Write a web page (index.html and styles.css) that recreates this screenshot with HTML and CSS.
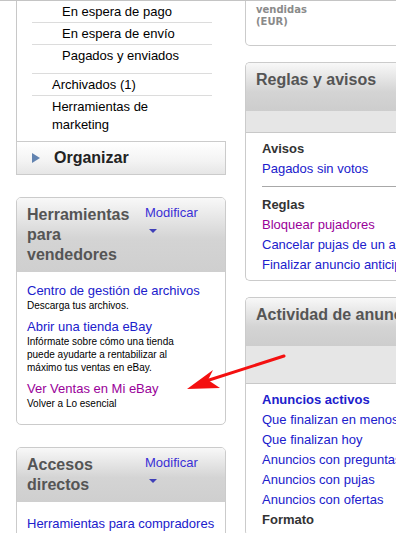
FILE: index.html
```html
<!DOCTYPE html>
<html lang="es">
<head>
<meta charset="utf-8">
<title>Mi eBay - Ventas</title>
<link rel="stylesheet" href="styles.css">
</head>
<body>
<div class="page">
  <div class="col-left">
    <ul class="nav-list">
      <li class="nav-item sub">En espera de pago</li>
      <li class="nav-item sub">En espera de envío</li>
      <li class="nav-item sub last-sub">Pagados y enviados</li>
      <li class="nav-item">Archivados (1)</li>
      <li class="nav-item multi">Herramientas de<br>marketing</li>
    </ul>
    <div class="nav-section"><span class="tri"></span>Organizar</div>

    <div class="box tools">
      <div class="box-head">
        <h2 class="box-title">Herramientas para vendedores</h2>
        <div class="modify"><a href="#">Modificar</a><span class="caret"></span></div>
      </div>
      <div class="box-body">
        <div class="tool">
          <a class="tool-link" href="#">Centro de gestión de archivos</a>
          <div class="tool-desc">Descarga tus archivos.</div>
        </div>
        <div class="tool">
          <a class="tool-link" href="#">Abrir una tienda eBay</a>
          <div class="tool-desc">Infórmate sobre cómo una tienda<br>puede ayudarte a rentabilizar al<br>máximo tus ventas en eBay.</div>
        </div>
        <div class="tool">
          <a class="tool-link visited" href="#">Ver Ventas en Mi eBay</a>
          <div class="tool-desc">Volver a Lo esencial</div>
        </div>
      </div>
    </div>

    <div class="box shortcuts">
      <div class="box-head">
        <h2 class="box-title">Accesos directos</h2>
        <div class="modify"><a href="#">Modificar</a><span class="caret"></span></div>
      </div>
      <div class="box-body shortcuts-body">
        <a class="tool-link" href="#">Herramientas para compradores</a>
      </div>
    </div>
  </div>

  <div class="col-right">
    <div class="summary">vendidas<br>(EUR)</div>

    <div class="rbox">
      <div class="rbox-head"><h2 class="box-title">Reglas y avisos</h2></div>
      <div class="band"></div>
      <div class="rbox-body">
        <div class="group-title">Avisos</div>
        <a class="rlink" href="#">Pagados sin votos</a>
        <div class="sep"></div>
        <div class="group-title">Reglas</div>
        <a class="rlink visited" href="#">Bloquear pujadores</a>
        <a class="rlink" href="#">Cancelar pujas de un anuncio</a>
        <a class="rlink" href="#">Finalizar anuncio anticipadamente</a>
      </div>
    </div>

    <div class="rbox">
      <div class="rbox-head"><h2 class="box-title">Actividad de anuncios</h2></div>
      <div class="band tall"></div>
      <div class="rbox-body">
        <a class="rlink strong" href="#">Anuncios activos</a>
        <a class="rlink" href="#">Que finalizan en menos de 24 horas</a>
        <a class="rlink" href="#">Que finalizan hoy</a>
        <a class="rlink" href="#">Anuncios con preguntas</a>
        <a class="rlink" href="#">Anuncios con pujas</a>
        <a class="rlink" href="#">Anuncios con ofertas</a>
        <div class="group-title">Formato</div>
      </div>
    </div>
  </div>
</div>

<svg class="arrow" width="396" height="533" viewBox="0 0 396 533" aria-hidden="true">
  <line x1="284" y1="356" x2="206" y2="381" stroke="#f41010" stroke-width="3" stroke-linecap="round"/>
  <polygon points="187,389 213,370 208,380 220,388" fill="#f41010"/>
</svg>
</body>
</html>
```
FILE: styles.css
```css
html, body {
  margin: 0;
  padding: 0;
  overflow: hidden;
  background: #fff;
}

body {
  font-family: "Liberation Sans", Arial, sans-serif;
  font-size: 13px;
  color: #000;
  border-top: 1px solid #c4c4c4;
  height: 532px;
  position: relative;
}

a {
  color: #2020cc;
  text-decoration: none;
}

a.visited {
  color: #990099;
}

.page {
  display: flex;
  align-items: flex-start;
  gap: 19px;
  padding-left: 16px;
}

.col-left {
  width: 210px;
  flex: none;
  display: flex;
  flex-direction: column;
}

.col-right {
  width: 330px;
  flex: none;
  display: flex;
  flex-direction: column;
}

/* ---------- left navigation ---------- */
.nav-list {
  list-style: none;
  margin: 0;
  padding: 0 14px 0 15px;
  border-left: 1px solid #c8c8c8;
}

.nav-item {
  padding: 2px 0 2px 20px;
  line-height: 17px;
  border-bottom: 1px solid #dcdcdc;
}

.nav-item.sub {
  padding-left: 30px;
}

.nav-item.last-sub {
  padding-bottom: 9px;
}

.nav-item.multi {
  border-bottom: 0;
  padding-top: 2px;
  padding-bottom: 7px;
  line-height: 18px;
}

.nav-section {
  display: flex;
  align-items: center;
  height: 32px;
  border: 1px solid #cbcbcb;
  background: linear-gradient(#ffffff, #f3f3f3 60%, #e6e6e6);
  font-size: 16px;
  font-weight: bold;
  color: #222;
  padding-left: 15px;
}

.tri {
  width: 0;
  height: 0;
  border-left: 8px solid #6283b0;
  border-top: 5.5px solid transparent;
  border-bottom: 5.5px solid transparent;
  margin-right: 14px;
}

/* ---------- boxes ---------- */
.box {
  border: 1px solid #cbcbcb;
  border-radius: 5px;
  overflow: hidden;
  margin-top: 22px;
}

.box-head {
  display: flex;
  align-items: flex-start;
  padding: 7px 10px 7px;
  background: linear-gradient(#f8f8f8, #d4d4d4 55%, #cfcfcf);
}

.box-title {
  margin: 0;
  font-size: 16px;
  line-height: 20px;
  font-weight: bold;
  color: #555;
}

.box .box-title {
  width: 118px;
}

.modify {
  display: flex;
  flex-direction: column;
  line-height: 16px;
}

.modify a {
  color: #3a2fd6;
}

.caret {
  width: 0;
  height: 0;
  margin: 8px 0 0 4px;
  border-top: 4px solid #4040b8;
  border-left: 4px solid transparent;
  border-right: 4px solid transparent;
}

.box-body {
  padding: 11px 10px 14px;
}

.shortcuts-body {
  padding-top: 14px;
}

.tool + .tool {
  margin-top: 7px;
}

.tool-link {
  display: block;
  font-size: 13px;
  line-height: 16px;
  white-space: nowrap;
}

.tool-desc {
  font-size: 10px;
  line-height: 13px;
  color: #000;
}

/* ---------- right column ---------- */
.summary {
  border: 1px solid #cbcbcb;
  border-top: 0;
  border-radius: 0 0 0 5px;
  padding: 3px 10px 17px;
  font-family: "DejaVu Sans", Verdana, sans-serif;
  font-size: 10px;
  font-weight: bold;
  line-height: 12px;
  color: #8a8a8a;
}

.rbox {
  border: 1px solid #cbcbcb;
  border-right: 0;
  border-radius: 5px 0 0 5px;
  overflow: hidden;
  margin-top: 16px;
}

.rbox + .rbox {
  margin-top: 16px;
}

.rbox-head {
  height: 48px;
  box-sizing: border-box;
  padding: 7px 10px 0;
  background: linear-gradient(#f8f8f8, #d4d4d4 60%, #cdcdcd);
}

.band {
  height: 21px;
  background: #e6e6e6;
  border-bottom: 1px solid #c8c8c8;
}

.band.tall {
  height: 37px;
}

.rbox-body {
  padding: 6px 16px 5px;
  line-height: 20px;
}

.group-title {
  font-weight: bold;
  color: #333;
}

.rlink {
  display: block;
  white-space: nowrap;
}

.rlink.strong {
  font-weight: bold;
}

.sep {
  border-top: 1px solid #a8a8a8;
  margin: 7px 0 8px;
}

/* ---------- annotation ---------- */
.arrow {
  position: absolute;
  left: 0;
  top: -1px;
  pointer-events: none;
}
```
